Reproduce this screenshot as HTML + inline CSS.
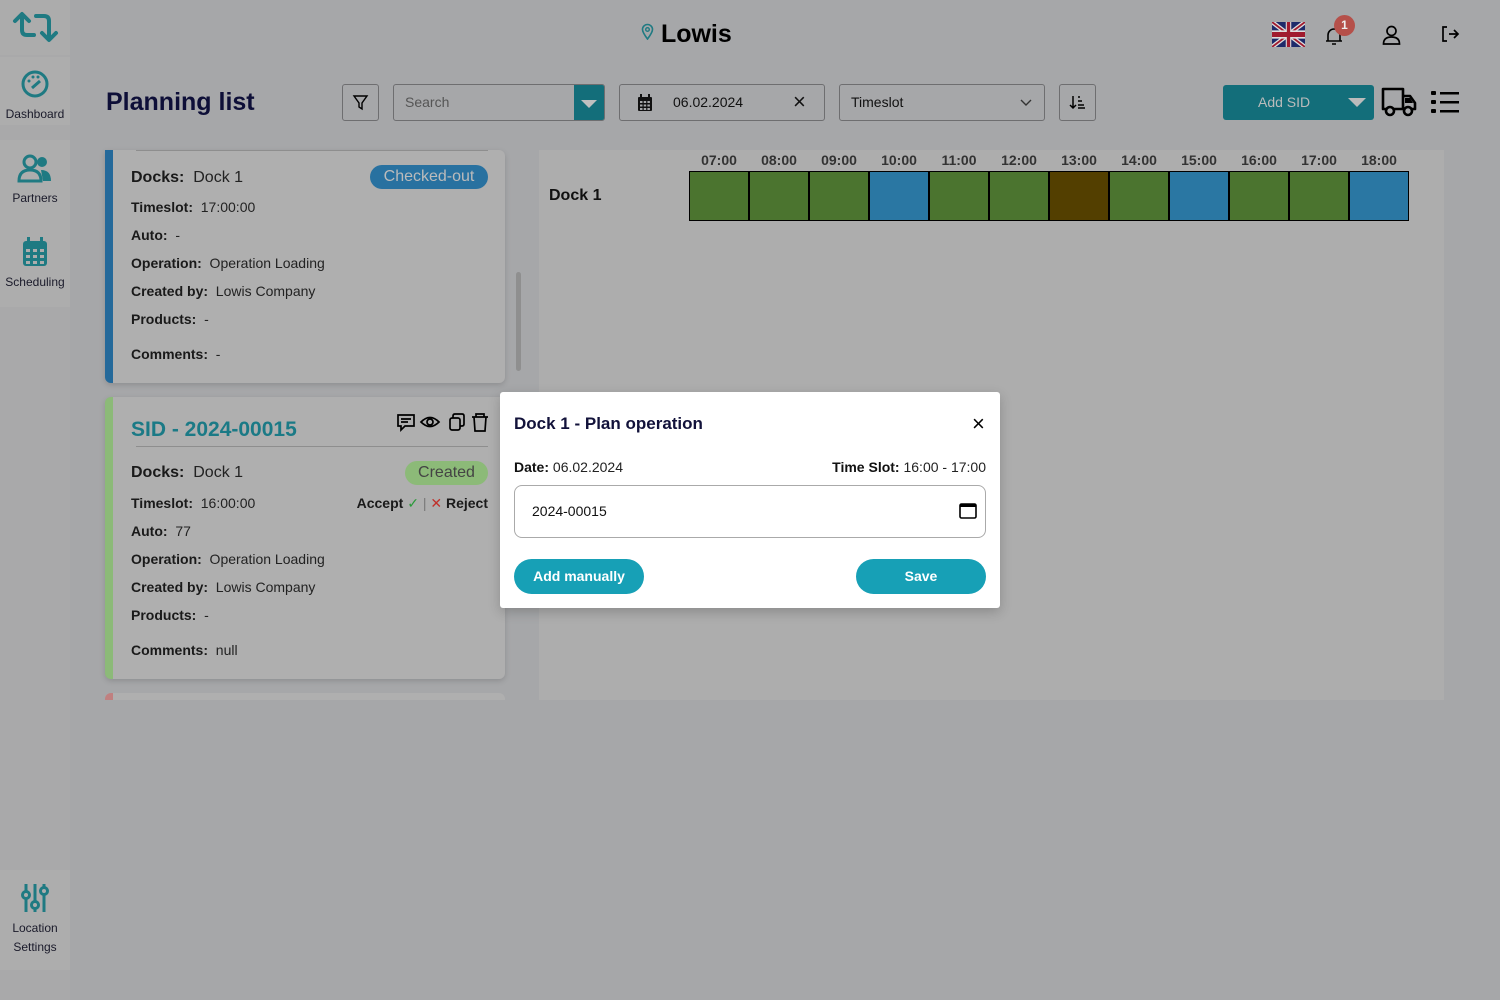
<!DOCTYPE html>
<html><head><meta charset="utf-8"><style>
*{box-sizing:border-box;margin:0;padding:0}
body{width:1500px;height:1000px;overflow:hidden;background:#a6a7a9;font-family:"Liberation Sans",sans-serif;position:relative;color:#111}
.a{position:absolute}
.side{left:0;top:0;width:70px;height:1000px;background:#a9a9aa}
.nav{left:0;width:70px;background:#adadad;text-align:center;font-size:12px;color:#1a1a2a}
.card{background:#afafaf;border-radius:6px;box-shadow:0 2px 6px rgba(0,0,0,.15)}
.row{font-size:14px;color:#222}
.row b{color:#1a1a1a}
.cell{top:171px;width:60px;height:50px;border:1.5px solid #000}
.g{background:#4b742f}.bl{background:#2a77a3}.br{background:#533f00}
.hr{top:152px;font-size:14px;font-weight:bold;color:#333;width:60px;text-align:center}
.box{border:1px solid #6e6e70;border-radius:3px}
</style></head><body>
<div class="a side"></div>
<div class="a nav" style="top:0;height:55px;background:#acacac">
<svg width="50" height="40" viewBox="0 0 50 40" style="margin-top:8px"><path d="M12 6 L5 13 M12 6 L19 13 M12 7 V22 Q12 27 17 27 H24" fill="none" stroke="#1f7a82" stroke-width="4" stroke-linecap="round" stroke-linejoin="round"/><path d="M26 8 H34 Q39 8 39 13 V30 M32 25 L39 32 L46 25" fill="none" stroke="#1f7a82" stroke-width="4" stroke-linecap="round" stroke-linejoin="round"/></svg></div>
<div class="a nav" style="top:57px;height:68px;padding-top:12px">
<svg width="30" height="30" viewBox="0 0 30 30"><circle cx="15" cy="15" r="12" fill="none" stroke="#1f7a82" stroke-width="3"/><path d="M12 19 L20 12" stroke="#1f7a82" stroke-width="3"/><circle cx="9" cy="12" r="1.5" fill="#1f7a82"/><circle cx="13" cy="8" r="1.5" fill="#1f7a82"/><circle cx="18" cy="8" r="1.5" fill="#1f7a82"/></svg><div style="margin-top:5px">Dashboard</div></div>
<div class="a nav" style="top:140px;height:82px;padding-top:13px">
<svg width="36" height="30" viewBox="0 0 36 30"><circle cx="13" cy="9" r="6" fill="none" stroke="#1f7a82" stroke-width="3"/><circle cx="25" cy="9" r="5" fill="#1f7a82"/><path d="M2 28 Q2 17 13 17 Q24 17 24 28 Z" fill="none" stroke="#1f7a82" stroke-width="3"/><path d="M24 17 Q34 17 34 28 H26" fill="#1f7a82"/></svg><div style="margin-top:5px">Partners</div></div>
<div class="a nav" style="top:222px;height:85px;padding-top:14px">
<svg width="28" height="32" viewBox="0 0 28 32"><rect x="2" y="5" width="24" height="25" rx="3" fill="#1f7a82"/><rect x="6" y="1" width="3" height="7" fill="#1f7a82"/><rect x="19" y="1" width="3" height="7" fill="#1f7a82"/><g fill="#adadad"><rect x="5" y="13" width="4" height="3"/><rect x="12" y="13" width="4" height="3"/><rect x="19" y="13" width="4" height="3"/><rect x="5" y="19" width="4" height="3"/><rect x="12" y="19" width="4" height="3"/><rect x="19" y="19" width="4" height="3"/><rect x="5" y="25" width="4" height="3"/><rect x="12" y="25" width="4" height="3"/><rect x="19" y="25" width="4" height="3"/></g></svg><div style="margin-top:4px">Scheduling</div></div>
<div class="a nav" style="top:870px;height:100px;padding-top:13px;line-height:19px">
<svg width="28" height="30" viewBox="0 0 28 30"><g stroke="#1f7a82" stroke-width="3" fill="none"><path d="M5 1V8M5 16V29M14 1V18M14 26V29M23 1V4M23 12V29"/><circle cx="5" cy="12" r="3.5"/><circle cx="14" cy="22" r="3.5"/><circle cx="23" cy="8" r="3.5"/></g></svg><div>Location<br>Settings</div></div>

<div class="a" style="left:641px;top:20px;font-size:25px;font-weight:bold;color:#000">
<svg width="13" height="17" viewBox="0 0 13 17" style="vertical-align:2px"><path d="M6.5 16 C2 10 1.5 8 1.5 6.5 A5 5 0 0 1 11.5 6.5 C11.5 8 11 10 6.5 16Z" fill="none" stroke="#1f7a82" stroke-width="1.6"/><circle cx="6.5" cy="6.5" r="1.8" fill="none" stroke="#1f7a82" stroke-width="1.4"/></svg> Lowis</div>
<svg class="a" style="left:1272px;top:22px" width="33" height="25" viewBox="0 0 33 25" preserveAspectRatio="none"><svg width="33" height="25" viewBox="0 0 60 30" preserveAspectRatio="none"><rect width="60" height="30" fill="#1e2a6a"/><path d="M0 0L60 30M60 0L0 30" stroke="#ddd" stroke-width="6"/><path d="M0 0L60 30M60 0L0 30" stroke="#a01b2f" stroke-width="2.5"/><path d="M30 0V30M0 15H60" stroke="#ddd" stroke-width="10"/><path d="M30 0V30M0 15H60" stroke="#a01b2f" stroke-width="6"/></svg></svg>
<svg class="a" style="left:1324px;top:26px" width="20" height="20" viewBox="0 0 20 20"><path d="M4 15 V9 A6 6 0 0 1 16 9 V15 H2 H18 M8 18 H12" fill="none" stroke="#000" stroke-width="1.6"/></svg>
<div class="a" style="left:1334px;top:15px;width:21px;height:21px;border-radius:50%;background:#b5504a;color:#eee;font-size:12px;font-weight:bold;text-align:center;line-height:21px">1</div>
<svg class="a" style="left:1381px;top:24px" width="21" height="21" viewBox="0 0 21 21"><circle cx="10.5" cy="7" r="4.5" fill="none" stroke="#000" stroke-width="1.7"/><path d="M2.5 20 Q2.5 13 10.5 13 Q18.5 13 18.5 20 Z" fill="none" stroke="#000" stroke-width="1.7"/></svg>
<svg class="a" style="left:1440px;top:25px" width="20" height="18" viewBox="0 0 20 18"><path d="M7 2H3V16H7M9 9H18M14 5L18 9L14 13" fill="none" stroke="#000" stroke-width="1.7"/></svg>

<div class="a" style="left:106px;top:88px;font-size:25px;font-weight:bold;color:#0e0f38">Planning list</div>
<div class="a box" style="left:342px;top:84px;width:37px;height:37px"><svg width="35" height="35" viewBox="0 0 35 35"><path d="M11 11H24L19 18V24L16 22V18Z" fill="none" stroke="#000" stroke-width="1.4"/></svg></div>
<div class="a box" style="left:393px;top:84px;width:212px;height:37px;font-size:14px;color:#555;padding:9px 11px;overflow:hidden">Search<div class="a" style="right:0;top:0;width:30px;height:37px;background:#136e7a"><svg width="30" height="36" viewBox="0 0 30 36"><path d="M7 15H23L15 23Z" fill="#bfbfbf"/></svg></div></div>
<div class="a box" style="left:619px;top:84px;width:206px;height:37px;font-size:14px;color:#111">
<svg class="a" style="left:17px;top:9px" width="16" height="18" viewBox="0 0 16 18"><rect x="1" y="3" width="14" height="14" rx="1" fill="#111"/><rect x="3" y="0" width="2" height="4" fill="#111"/><rect x="11" y="0" width="2" height="4" fill="#111"/><g fill="#a6a7a9"><rect x="3" y="7" width="2.5" height="2"/><rect x="6.7" y="7" width="2.5" height="2"/><rect x="10.4" y="7" width="2.5" height="2"/><rect x="3" y="10.5" width="2.5" height="2"/><rect x="6.7" y="10.5" width="2.5" height="2"/><rect x="10.4" y="10.5" width="2.5" height="2"/><rect x="3" y="14" width="2.5" height="2"/><rect x="6.7" y="14" width="2.5" height="2"/><rect x="10.4" y="14" width="2.5" height="2"/></g></svg>
<span class="a" style="left:53px;top:9px">06.02.2024</span><span class="a" style="left:173px;top:4px;font-size:22px">×</span></div>
<div class="a box" style="left:839px;top:84px;width:206px;height:37px;font-size:14px;color:#111;padding:9px 11px">Timeslot<svg class="a" style="right:12px;top:14px" width="12" height="8" viewBox="0 0 12 8"><path d="M1 1L6 6L11 1" fill="none" stroke="#333" stroke-width="1.4"/></svg></div>
<div class="a box" style="left:1059px;top:84px;width:37px;height:37px"><svg width="35" height="35" viewBox="0 0 35 35"><path d="M13 11V23M10 20L13 23L16 20M18 12H20M18 16H22M18 20H24M18 23H25" fill="none" stroke="#000" stroke-width="1.5"/></svg></div>
<div class="a" style="left:1223px;top:85px;width:151px;height:35px;background:#136e7a;border-radius:3px;color:#bbb;font-size:14px;padding:9px 0 0 35px">Add SID<svg class="a" style="right:6px;top:10px" width="22" height="14" viewBox="0 0 22 14"><path d="M2 3H20L11 12Z" fill="#bbb"/></svg></div>
<svg class="a" style="left:1381px;top:86px" width="36" height="32" viewBox="0 0 36 32"><path d="M2 3H22V23H2Z M22 10H29L34 17V23H22" fill="none" stroke="#000" stroke-width="2.6" stroke-linejoin="round"/><path d="M24 12H29L32 17H24Z" fill="#000"/><circle cx="9" cy="25" r="4" fill="#a6a7a9" stroke="#000" stroke-width="2.6"/><circle cx="27" cy="25" r="4" fill="#a6a7a9" stroke="#000" stroke-width="2.6"/></svg>
<svg class="a" style="left:1431px;top:90px" width="28" height="24" viewBox="0 0 28 24"><g fill="#000"><rect x="0" y="1" width="5" height="4" rx="1"/><rect x="0" y="10" width="5" height="4" rx="1"/><rect x="0" y="19" width="5" height="4" rx="1"/><rect x="9" y="2" width="19" height="2.5"/><rect x="9" y="11" width="19" height="2.5"/><rect x="9" y="20" width="19" height="2.5"/></g></svg>

<!-- cards -->
<div class="a card" style="left:105px;top:150px;width:400px;height:233px;border-left:8px solid #24699a;border-radius:0 6px 6px 6px">
<div class="a" style="left:23px;top:0;width:352px;border-top:1px solid #8e8e8e"></div>
<div class="a" style="left:18px;top:19px;font-size:16px;color:#222"><b style="color:#1a1a1a">Docks:</b>&nbsp; Dock 1</div>
<div class="a" style="left:257px;top:15px;width:118px;height:24px;border-radius:12px;background:#2871a0;color:#bbb;font-size:16px;text-align:center;line-height:24px">Checked-out</div>
<div class="a row" style="left:18px;top:49px"><b>Timeslot:</b>&nbsp; 17:00:00</div>
<div class="a row" style="left:18px;top:77px"><b>Auto:</b>&nbsp; -</div>
<div class="a row" style="left:18px;top:105px"><b>Operation:</b>&nbsp; Operation Loading</div>
<div class="a row" style="left:18px;top:133px"><b>Created by:</b>&nbsp; Lowis Company</div>
<div class="a row" style="left:18px;top:161px"><b>Products:</b>&nbsp; -</div>
<div class="a row" style="left:18px;top:196px"><b>Comments:</b>&nbsp; -</div>
</div>
<div class="a" style="left:516px;top:272px;width:5px;height:99px;background:#8f8f8f;border-radius:3px"></div>

<div class="a card" style="left:105px;top:397px;width:400px;height:282px;border-left:8px solid #8cba78">
<div class="a" style="left:18px;top:21px;font-size:21px;color:#1b7a86;font-weight:bold">SID - 2024-00015</div>
<div class="a" style="left:283px;top:15px">
<svg width="94" height="22" viewBox="0 0 94 22"><g fill="none" stroke="#000" stroke-width="1.7"><path d="M2 3H18V14H9L5 18V14H2Z M5 7H15M5 10H12"/><path d="M25 10 Q34 1 43 10 Q34 19 25 10Z"/><circle cx="34" cy="10" r="3"/><rect x="54" y="6" width="10" height="12" rx="2"/><path d="M57 6V4Q57 2 59 2H66Q68 2 68 4V12Q68 14 66 14H64"/><path d="M76 5H92M80 5V2H88V5M78 5L79 19H89L90 5"/></g></svg></div>
<div class="a" style="left:23px;top:49px;width:352px;border-top:1px solid #8e8e8e"></div>
<div class="a" style="left:18px;top:67px;font-size:16px;color:#222"><b style="color:#1a1a1a">Docks:</b>&nbsp; Dock 1</div>
<div class="a" style="left:292px;top:64px;width:83px;height:24px;border-radius:12px;background:#8cba78;color:#444;font-size:16px;text-align:center;line-height:24px">Created</div>
<div class="a row" style="right:17px;top:98px"><b>Accept</b> <span style="color:#2a9a3a">✓</span> <span style="color:#777">|</span> <span style="color:#c0302a">✕</span> <b>Reject</b></div>
<div class="a row" style="left:18px;top:98px"><b>Timeslot:</b>&nbsp; 16:00:00</div>
<div class="a row" style="left:18px;top:126px"><b>Auto:</b>&nbsp; 77</div>
<div class="a row" style="left:18px;top:154px"><b>Operation:</b>&nbsp; Operation Loading</div>
<div class="a row" style="left:18px;top:182px"><b>Created by:</b>&nbsp; Lowis Company</div>
<div class="a row" style="left:18px;top:210px"><b>Products:</b>&nbsp; -</div>
<div class="a row" style="left:18px;top:245px"><b>Comments:</b>&nbsp; null</div>
</div>
<div class="a card" style="left:105px;top:693px;width:400px;height:7px;border-left:8px solid #c08080;border-radius:6px 6px 0 0;box-shadow:none"></div>

<!-- chart -->
<div class="a" style="left:539px;top:150px;width:905px;height:550px;background:#adadad"></div>
<div class="a" style="left:549px;top:187px;font-size:16px;font-weight:bold;color:#111">Dock 1</div>
<div class="a hr" style="left:689px">07:00</div><div class="a hr" style="left:749px">08:00</div><div class="a hr" style="left:809px">09:00</div><div class="a hr" style="left:869px">10:00</div><div class="a hr" style="left:929px">11:00</div><div class="a hr" style="left:989px">12:00</div><div class="a hr" style="left:1049px">13:00</div><div class="a hr" style="left:1109px">14:00</div><div class="a hr" style="left:1169px">15:00</div><div class="a hr" style="left:1229px">16:00</div><div class="a hr" style="left:1289px">17:00</div><div class="a hr" style="left:1349px">18:00</div>
<div class="a cell g" style="left:689px"></div><div class="a cell g" style="left:749px"></div><div class="a cell g" style="left:809px"></div><div class="a cell bl" style="left:869px"></div><div class="a cell g" style="left:929px"></div><div class="a cell g" style="left:989px"></div><div class="a cell br" style="left:1049px"></div><div class="a cell g" style="left:1109px"></div><div class="a cell bl" style="left:1169px"></div><div class="a cell g" style="left:1229px"></div><div class="a cell g" style="left:1289px"></div><div class="a cell bl" style="left:1349px"></div>

<!-- modal -->
<div class="a" style="left:500px;top:392px;width:500px;height:216px;background:#fff;border-radius:3px;box-shadow:0 4px 12px rgba(0,0,0,.2)">
<div class="a" style="left:14px;top:22px;font-size:17px;font-weight:bold;color:#12123a">Dock 1 - Plan operation</div>
<div class="a" style="left:472px;top:19px;font-size:22px;color:#000">×</div>
<div class="a" style="left:14px;top:67px;font-size:14px;color:#222"><b style="color:#111">Date:</b> 06.02.2024</div>
<div class="a" style="right:14px;top:67px;font-size:14px;color:#222"><b style="color:#111">Time Slot:</b> 16:00 - 17:00</div>
<div class="a" style="left:14px;top:93px;width:472px;height:53px;border:1px solid #aaa;border-radius:8px;font-size:14px;color:#111;padding:17px 17px">2024-00015
<svg class="a" style="right:8px;top:17px" width="18" height="16" viewBox="0 0 18 16"><rect x="1" y="1" width="16" height="14" rx="1.5" fill="none" stroke="#000" stroke-width="1.6"/><rect x="1" y="1" width="16" height="3" fill="#000"/></svg></div>
<div class="a" style="left:14px;top:167px;width:130px;height:35px;border-radius:18px;background:#17a0b6;color:#fff;font-size:14px;font-weight:bold;text-align:center;line-height:35px">Add manually</div>
<div class="a" style="left:356px;top:167px;width:130px;height:35px;border-radius:18px;background:#17a0b6;color:#fff;font-size:14px;font-weight:bold;text-align:center;line-height:35px">Save</div>
</div>
</body></html>
